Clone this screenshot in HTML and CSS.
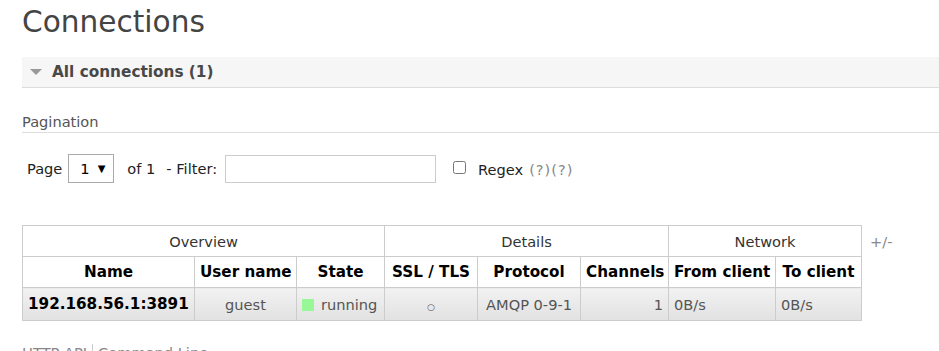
FILE: index.html
```html
<!DOCTYPE html>
<html lang="en">
<head>
    <meta charset="utf-8">
    <title>Connections</title>
    <link rel="stylesheet" href="styles.css">
</head>
<body>
    <div class="main">
        <h1>Connections</h1>

        <div class="section">
            <h2 class="section-title"><span class="toggle"></span>All connections (1)</h2>

            <div class="pagination">
                <h3>Pagination</h3>
                <div class="filter-row">
                    <span class="label">Page</span>
                    <div class="page-select"><span>1</span><span class="arrow">&#9660;</span></div>
                    <span class="of">of 1</span>
                    <span class="label">- Filter:</span>
                    <input type="text" class="filter-input">
                    <input type="checkbox" class="regex-box">
                    <span class="regex">Regex</span>
                    <span class="help">(?)(?)</span>
                </div>
            </div>

            <div class="table-wrap">
                <table class="list">
                    <colgroup>
                        <col class="c-name"><col class="c-user"><col class="c-state">
                        <col class="c-ssl"><col class="c-proto"><col class="c-chan">
                        <col class="c-from"><col class="c-to">
                    </colgroup>
                    <thead>
                        <tr class="group">
                            <th colspan="3">Overview</th>
                            <th colspan="3">Details</th>
                            <th colspan="2">Network</th>
                        </tr>
                        <tr class="cols">
                            <th>Name</th>
                            <th>User name</th>
                            <th>State</th>
                            <th>SSL / TLS</th>
                            <th>Protocol</th>
                            <th>Channels</th>
                            <th>From client</th>
                            <th>To client</th>
                        </tr>
                    </thead>
                    <tbody>
                        <tr class="row">
                            <td class="name">192.168.56.1:3891</td>
                            <td class="c">guest</td>
                            <td class="state"><span class="dot"></span>running</td>
                            <td class="c"><span class="ssl">&#9675;</span></td>
                            <td class="c">AMQP 0-9-1</td>
                            <td class="r">1</td>
                            <td>0B/s</td>
                            <td>0B/s</td>
                        </tr>
                    </tbody>
                </table>
                <span class="plus-minus">+/-</span>
            </div>
        </div>

        <div class="footer">
            <a>HTTP API</a><a>Command Line</a>
        </div>
    </div>
</body>
</html>
```

FILE: styles.css
```css
body {
    margin: 0;
    font-family: "DejaVu Sans", Verdana, sans-serif;
    font-size: 14.6px;
    color: #444;
    background: #fff;
    overflow: hidden;
}
.main {
    padding-left: 22px;
}
h1 {
    margin: 4px 0 0 0;
    font-size: 29.6px;
    font-weight: normal;
    line-height: 36px;
    color: #444;
}

.section-title {
    margin: 17px 0 0 0;
    height: 30px;
    line-height: 30px;
    background: #f6f6f6;
    border-bottom: 1px solid #ddd;
    font-size: 15.3px;
    font-weight: bold;
    color: #484848;
    display: flex;
    align-items: center;
}
.toggle {
    width: 0;
    height: 0;
    margin: 0 10px 0 8px;
    border-left: 6px solid transparent;
    border-right: 6px solid transparent;
    border-top: 6px solid #999;
}

.pagination h3 {
    margin: 24px 0 0 0;
    font-size: 14.6px;
    font-weight: normal;
    color: #555;
    line-height: 20px;
    border-bottom: 1px solid #ddd;
}
.filter-row {
    display: flex;
    align-items: center;
    margin-top: 21px;
    padding-left: 5px;
    color: #222;
}
.page-select {
    display: flex;
    align-items: center;
    justify-content: space-between;
    box-sizing: border-box;
    width: 46px;
    height: 29px;
    margin-left: 6px;
    padding: 0 8px 0 11px;
    border: 1px solid #aaa;
    color: #000;
}
.page-select .arrow {
    font-size: 10px;
}
.of {
    margin: 0 11px 0 13px;
}
.filter-input {
    box-sizing: border-box;
    width: 211px;
    height: 28px;
    margin: 0 0 0 8px;
    border: 1px solid #ccc;
}
.regex-box {
    width: 13px;
    height: 13px;
    margin: 0 0 3px 17px;
}
.regex {
    margin-left: 12px;
    margin-top: 2px;
}
.help {
    margin-left: 6px;
    margin-top: 2px;
    color: #888;
    letter-spacing: 1px;
}

.table-wrap {
    display: flex;
    align-items: flex-start;
    margin-top: 42px;
}
table.list {
    width: 840px;
    table-layout: fixed;
    border-collapse: collapse;
}
.c-name { width: 172px; }
.c-user { width: 102px; }
.c-state { width: 88px; }
.c-ssl { width: 93px; }
.c-proto { width: 103px; }
.c-chan { width: 88px; }
.c-from { width: 107px; }
.c-to { width: 86px; }

.list th, .list td {
    border: 1px solid #ccc;
    padding: 0 5px;
    white-space: nowrap;
    overflow: hidden;
}
.list tr.group th {
    height: 30px;
    font-weight: normal;
    color: #333;
}
.list tr.cols th {
    height: 30px;
    font-size: 15.2px;
    font-weight: bold;
    color: #000;
}
.list td {
    height: 32px;
    color: #555;
    background: linear-gradient(#f2f2f2, #e2e2e2);
}
.list td.name {
    font-size: 15.2px;
    font-weight: bold;
    color: #000;
}
.list td.c { text-align: center; }
.list td.r { text-align: right; }
.dot {
    display: inline-block;
    width: 12px;
    height: 12px;
    margin-right: 7px;
    vertical-align: -1px;
    background: #98f898;
}
.ssl {
    font-size: 9px;
}
.plus-minus {
    margin: 8px 0 0 8px;
    color: #888;
}

.footer {
    margin-top: 23px;
    color: #888;
}
.footer a {
    padding: 0 5px;
}
.footer a:first-child {
    padding-left: 0;
    border-right: 1px solid #ccc;
}
```
